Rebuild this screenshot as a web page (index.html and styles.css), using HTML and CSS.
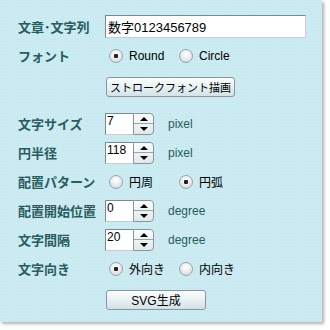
FILE: index.html
```html
<!DOCTYPE html>
<html lang="ja">
<head>
    <meta charset="UTF-8">
    <title>ストロークフォント</title>
    <link rel="stylesheet" href="styles.css">
</head>
<body>
    <div class="panel">
        <div class="row">
            <label class="label">文章･文字列</label>
            <input type="text" class="text-input" value="数字0123456789">
        </div>
        <div class="row">
            <label class="label">フォント</label>
            <label class="radio"><input type="radio" name="font" checked><span>Round</span></label>
            <label class="radio"><input type="radio" name="font"><span>Circle</span></label>
        </div>
        <div class="row row-button">
            <span class="label"></span>
            <button class="btn btn-wide">ストロークフォント描画</button>
        </div>
        <div class="row">
            <label class="label">文字サイズ</label>
            <span class="spin"><input type="text" class="num" value="7"><span class="arrows"><i class="up"></i><i class="down"></i></span></span>
            <span class="unit">pixel</span>
        </div>
        <div class="row">
            <label class="label">円半径</label>
            <span class="spin"><input type="text" class="num" value="118"><span class="arrows"><i class="up"></i><i class="down"></i></span></span>
            <span class="unit">pixel</span>
        </div>
        <div class="row">
            <label class="label">配置パターン</label>
            <label class="radio"><input type="radio" name="pattern"><span>円周</span></label>
            <label class="radio"><input type="radio" name="pattern" checked><span>円弧</span></label>
        </div>
        <div class="row">
            <label class="label">配置開始位置</label>
            <span class="spin"><input type="text" class="num" value="0"><span class="arrows"><i class="up"></i><i class="down"></i></span></span>
            <span class="unit">degree</span>
        </div>
        <div class="row">
            <label class="label">文字間隔</label>
            <span class="spin"><input type="text" class="num" value="20"><span class="arrows"><i class="up"></i><i class="down"></i></span></span>
            <span class="unit">degree</span>
        </div>
        <div class="row">
            <label class="label">文字向き</label>
            <label class="radio"><input type="radio" name="dir" checked><span>外向き</span></label>
            <label class="radio"><input type="radio" name="dir"><span>内向き</span></label>
        </div>
        <div class="row row-button">
            <span class="label"></span>
            <button class="btn btn-svg">SVG生成</button>
        </div>
    </div>
</body>
</html>
```

FILE: styles.css
```css
* {
    margin: 0;
    padding: 0;
    box-sizing: border-box;
}

body {
    background: #fff;
    font-family: "Liberation Sans", "Noto Sans CJK JP", sans-serif;
    width: 330px;
    height: 330px;
    overflow: hidden;
}

.panel {
    width: 322px;
    height: 322px;
    background-color: #c8eaf0;
    background-image: radial-gradient(circle, rgba(255, 255, 255, 0.25) 0.6px, transparent 0.8px);
    background-size: 3px 3px;
    box-shadow: 2px 2px 3px rgba(0, 0, 0, 0.3);
    padding: 12px 0 0 18px;
}

.row {
    display: flex;
    align-items: center;
    height: 29px;
}

.row-button {
    height: 33px;
    margin-bottom: 6px;
}

.label {
    width: 87px;
    flex-shrink: 0;
    font-family: "Noto Sans CJK JP", sans-serif;
    font-weight: bold;
    font-size: 13px;
    color: #2a5c5e;
}

.text-input {
    width: 201px;
    height: 23px;
    border: 1px solid #7a8a8c;
    border-right-color: #ccc;
    border-bottom-color: #ccc;
    background: #fff;
    font-family: "Liberation Sans", "Noto Sans CJK JP", sans-serif;
    font-size: 13px;
    color: #000;
    padding: 0 2px;
    outline: none;
}

.radio {
    display: flex;
    align-items: center;
    width: 66px;
    margin-left: 4px;
    font-size: 12px;
    color: #000;
}

.radio input {
    appearance: none;
    width: 14px;
    height: 14px;
    border-radius: 50%;
    border: 1px solid #9aa4a8;
    background: radial-gradient(circle at 50% 35%, #fff 0%, #e6eaec 55%, #c4cbd0 100%);
    margin-right: 6px;
    position: relative;
}

.radio input:checked::after {
    content: "";
    position: absolute;
    left: 4px;
    top: 4px;
    width: 4px;
    height: 4px;
    border-radius: 1px;
    background: #222;
}

.radio span {
    font-family: "Liberation Sans", "Noto Sans CJK JP", sans-serif;
}

.btn {
    height: 20px;
    margin-left: 1px;
    padding: 0;
    white-space: nowrap;
    border: 1px solid #8a9598;
    border-radius: 3px;
    background: linear-gradient(#fbfdfd, #e4eef1 60%, #d3e2e6);
    font-family: "Noto Sans CJK JP", sans-serif;
    font-size: 11px;
    color: #000;
}

.btn-wide {
    width: 129px;
}

.btn-svg {
    width: 100px;
    font-family: "Liberation Sans", "Noto Sans CJK JP", sans-serif;
    font-size: 12px;
}

.spin {
    display: flex;
    margin-right: 14px;
}

.num {
    width: 28px;
    height: 22px;
    border: 1px solid #7a8a8c;
    border-right: none;
    border-bottom-color: #ccc;
    background: #fff;
    font-family: "Liberation Sans", sans-serif;
    font-size: 12px;
    padding: 0 1px 6px;
    line-height: 12px;
    outline: none;
    vertical-align: top;
}

.arrows {
    display: flex;
    flex-direction: column;
    width: 21px;
    height: 22px;
    border: 1px solid #8a9598;
    border-radius: 0 4px 4px 0;
    background: linear-gradient(#fbfdfd, #dfe9ec);
    overflow: hidden;
}

.arrows i {
    flex: 1;
    position: relative;
}

.arrows .up {
    border-bottom: 1px solid #9aa6aa;
}

.arrows .up::after,
.arrows .down::after {
    content: "";
    position: absolute;
    left: 6px;
    border-left: 4px solid transparent;
    border-right: 4px solid transparent;
}

.arrows .up::after {
    top: 3px;
    border-bottom: 4px solid #000;
}

.arrows .down::after {
    top: 3px;
    border-top: 4px solid #000;
}

.unit {
    font-size: 12px;
    color: #2a5c5e;
}
```
